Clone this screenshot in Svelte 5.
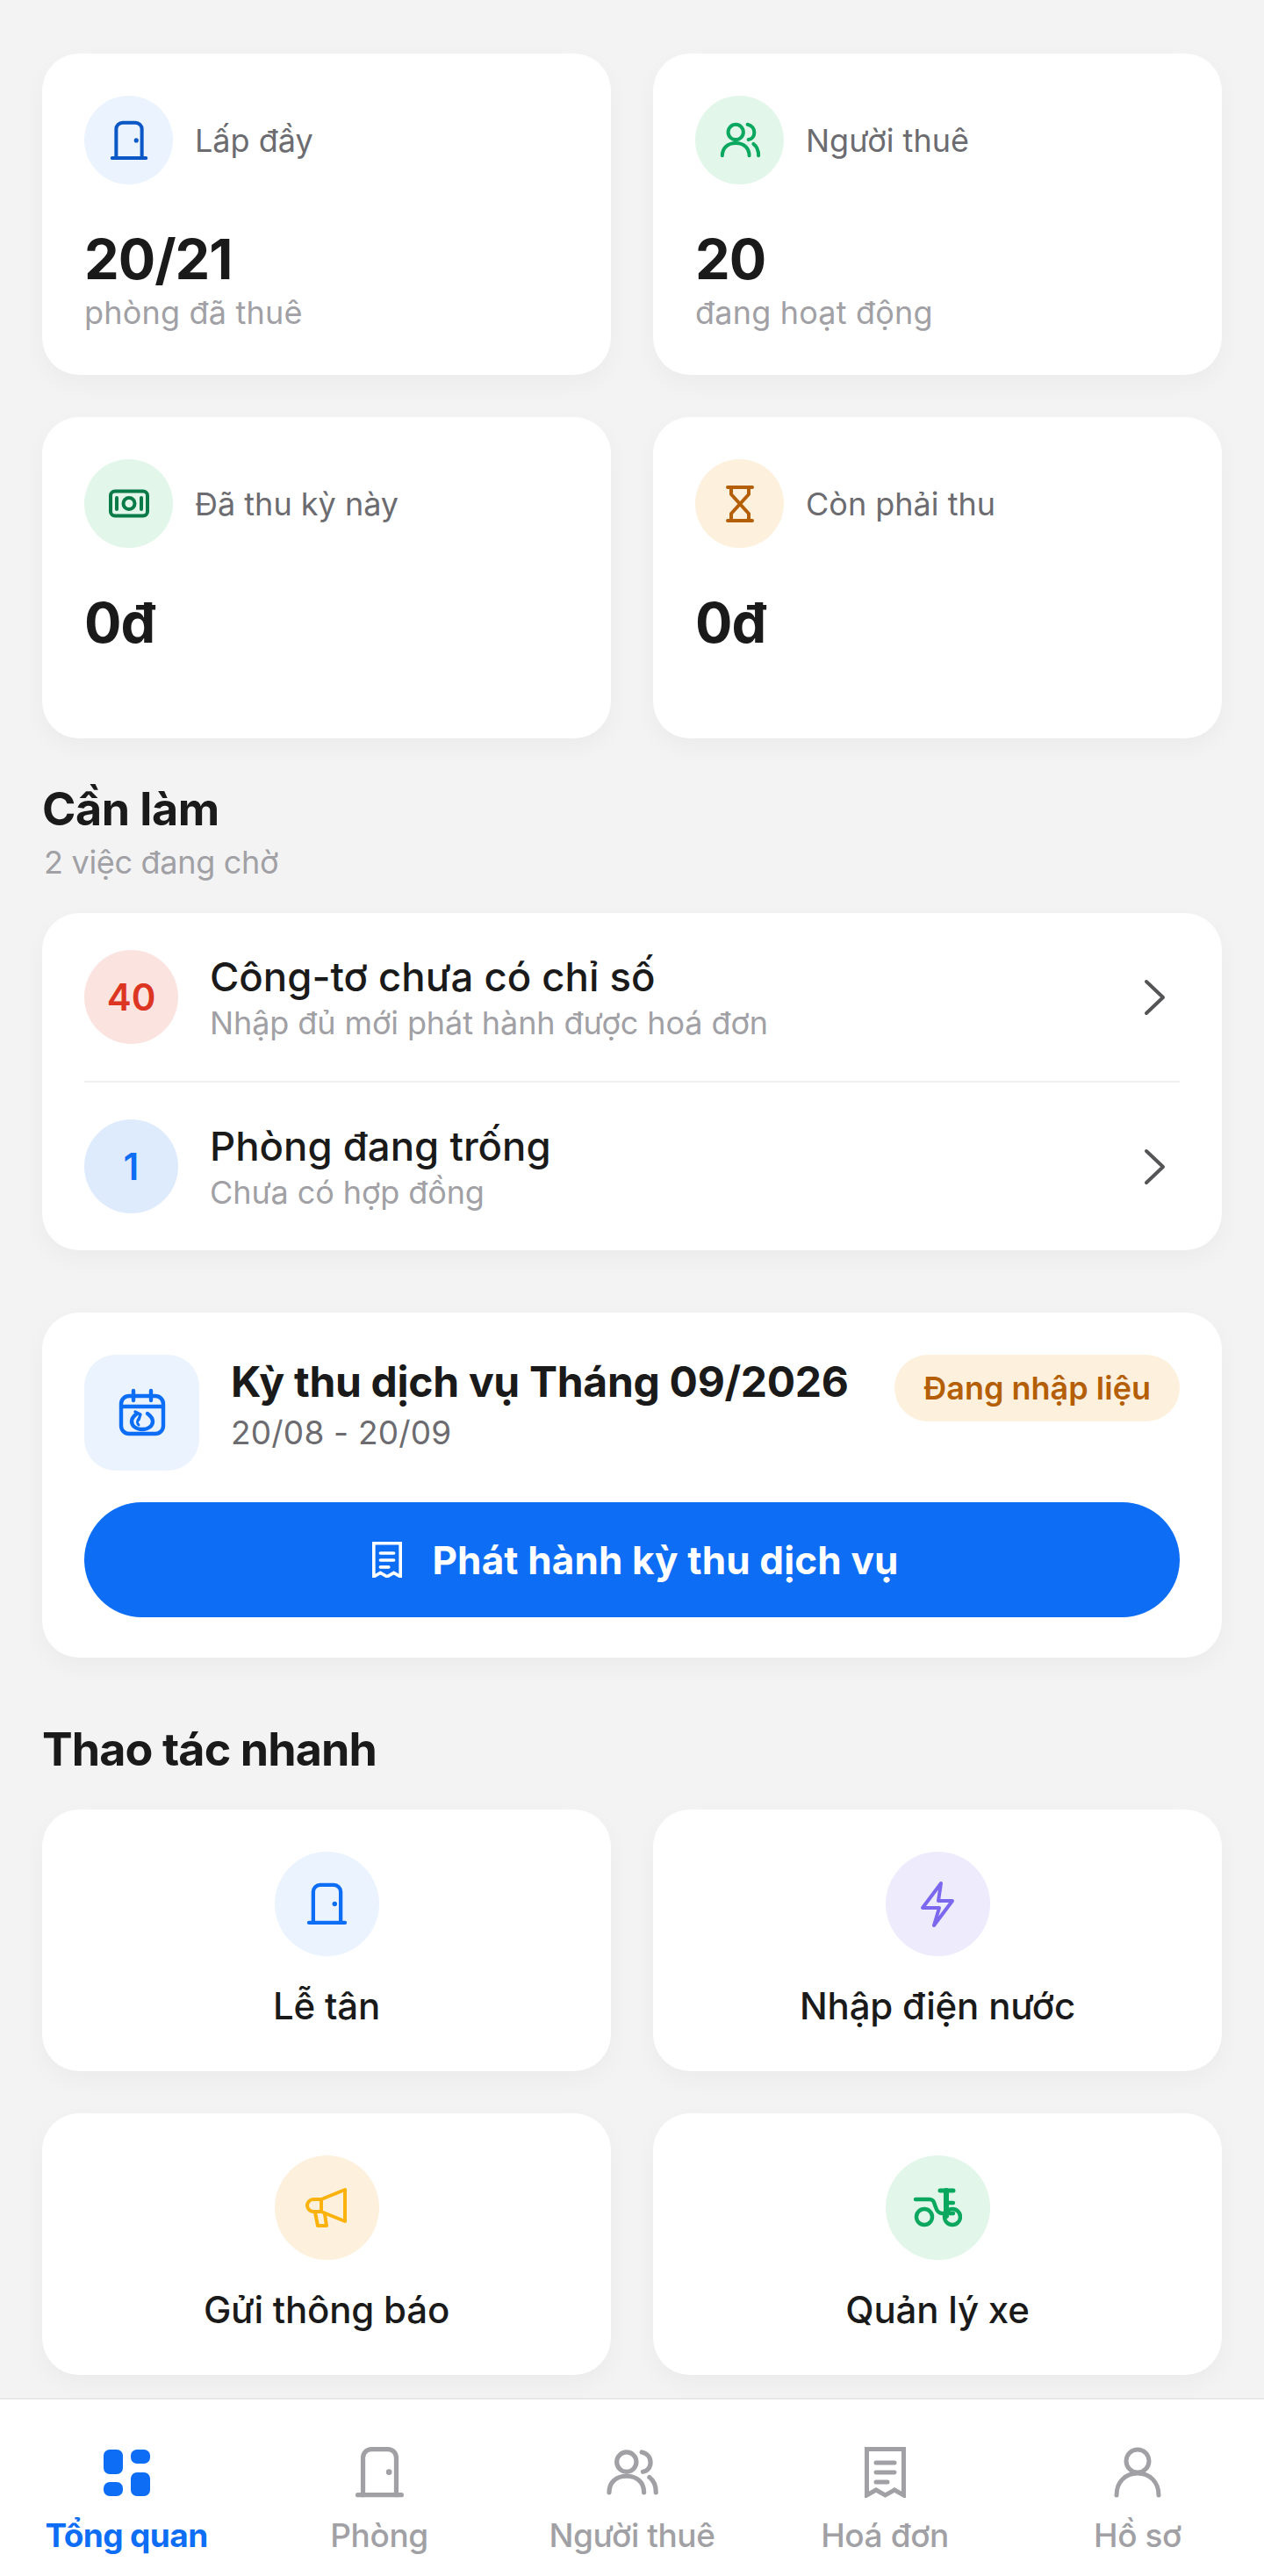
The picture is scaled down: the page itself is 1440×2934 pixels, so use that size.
<script>
  const stats = [
    { icon: "door", tone: "blue", label: "Lấp đầy", value: "20/21", sub: "phòng đã thuê" },
    { icon: "people", tone: "green", label: "Người thuê", value: "20", sub: "đang hoạt động" },
    { icon: "money", tone: "green", label: "Đã thu kỳ này", value: "0đ" },
    { icon: "hourglass", tone: "amber", label: "Còn phải thu", value: "0đ" }
  ];
  const todos = [
    { n: 40, tone: "red", title: "Công-tơ chưa có chỉ số", sub: "Nhập đủ mới phát hành được hoá đơn" },
    { n: 1, tone: "sky", title: "Phòng đang trống", sub: "Chưa có hợp đồng" }
  ];
  const actions = [
    { icon: "door", tone: "blue", label: "Lễ tân" },
    { icon: "bolt", tone: "violet", label: "Nhập điện nước" },
    { icon: "mega", tone: "yellow", label: "Gửi thông báo" },
    { icon: "bike", tone: "green", label: "Quản lý xe" }
  ];
  const tabs = [
    { icon: "grid", label: "Tổng quan", active: true },
    { icon: "door", label: "Phòng" },
    { icon: "people", label: "Người thuê" },
    { icon: "receipt", label: "Hoá đơn" },
    { icon: "person", label: "Hồ sơ" }
  ];
</script>

{#snippet door(w)}
  <svg width={w} height={w * 1.04} viewBox="0 0 48 50" fill="none" stroke="currentColor" stroke-width="4.4" stroke-linecap="round">
    <path d="M3 47H45" />
    <path d="M8 47V11a8 8 0 0 1 8-8h16a8 8 0 0 1 8 8v36" />
    <circle cx="33" cy="25" r="2.8" fill="currentColor" stroke="none" />
  </svg>
{/snippet}

{#snippet people(w)}
  <svg width={w} height={w * 0.89} viewBox="0 0 50 44.5" fill="none" stroke="currentColor" stroke-width="4.2" stroke-linecap="round">
    <circle cx="20" cy="13" r="9" />
    <path d="M4 41c0-9 6-15 16-15s16 6 16 15" />
    <path d="M34 4c5 1 8 5 8 9.500s-3 8-7 8.500" />
    <path d="M41 27c4 3 6 8 6 14" />
  </svg>
{/snippet}

{#snippet money()}
  <svg width="48" height="33" viewBox="0 0 48 33" fill="none" stroke="currentColor" stroke-width="4" stroke-linecap="round">
    <rect x="3" y="2.500" width="42" height="28" rx="5" />
    <circle cx="24" cy="16.500" r="6.500" />
    <path d="M10 10V23M38 10V23" />
  </svg>
{/snippet}

{#snippet hourglass()}
  <svg width="32" height="44" viewBox="0 0 32 44" fill="none" stroke="currentColor" stroke-width="4" stroke-linecap="round" stroke-linejoin="round">
    <path d="M2 3H30M2 41H30" />
    <path d="M6 3V11L26 33V41M26 3V11L6 33V41" />
  </svg>
{/snippet}

{#snippet bolt()}
  <svg width="40" height="54" viewBox="0 0 40 54" fill="none" stroke="currentColor" stroke-width="4" stroke-linejoin="round">
    <path d="M24 3 3 31H22L16 51 37 23H21Z" />
  </svg>
{/snippet}

{#snippet mega()}
  <svg width="48" height="47" viewBox="0 0 48 47" fill="none" stroke="currentColor" stroke-width="4" stroke-linejoin="round" stroke-linecap="round">
    <path d="M18 14 45 3V39L18 28Z" />
    <path d="M18 14H9a7 7 0 0 0 0 14H18Z" />
    <path d="M11 29 14 44H24L22 31" />
  </svg>
{/snippet}

{#snippet bike()}
  <svg width="56" height="46" viewBox="0 0 56 46" fill="none" stroke="currentColor" stroke-width="4.400" stroke-linecap="round" stroke-linejoin="round">
    <path d="M31 3H46" stroke-width="5" />
    <path d="M38 3V32" stroke-width="6" />
    <path d="M3 13H19c5 0 5 4 7 9 1 4 4 7 8 7H46" />
    <circle cx="13" cy="33" r="9" />
    <circle cx="45" cy="33" r="9" />
    <path d="M38 17H46" />
  </svg>
{/snippet}

{#snippet calendar()}
  <svg width="56" height="56" viewBox="0 0 56 56" fill="none" stroke="currentColor" stroke-width="4.400" stroke-linecap="round" stroke-linejoin="round">
    <rect x="4" y="9" width="48" height="43" rx="9" />
    <path d="M4 21H52" />
    <path d="M18 3V14M38 3V14" />
    <path d="M22 29c-4 3-6 6-6 9 0 5 5 9 12 9s12-4 12-9c0-3-2-6-6-9" />
    <path d="M20 27l6 3-2 6" stroke-width="3.400" />
    <path d="M24 42c-2-2-2-5 0-7" stroke-width="3" />
  </svg>
{/snippet}

{#snippet receipt(w)}
  <svg width={w} height={w * 1.234} viewBox="0 0 47 58" fill="none" stroke="currentColor" stroke-width="5" stroke-linecap="round" stroke-linejoin="miter">
    <path d="M2.500 2.500H44.500V55L34 49 23.500 55 13 49 2.500 55Z" />
    <path d="M13 18H34M13 29H34M13 40H26" />
  </svg>
{/snippet}

{#snippet grid()}
  <svg width="53" height="53" viewBox="0 0 53 53" fill="currentColor">
    <rect x="0" y="0" width="22" height="28" rx="7" />
    <rect x="0" y="37" width="22" height="16" rx="7" />
    <rect x="31" y="0" width="22" height="16" rx="7" />
    <rect x="31" y="26" width="22" height="27" rx="7" />
  </svg>
{/snippet}

{#snippet person()}
  <svg width="54" height="58" viewBox="0 0 54 58" fill="none" stroke="currentColor" stroke-width="5" stroke-linecap="round">
    <circle cx="27" cy="16" r="13" />
    <path d="M3 55c0-15 10-25 24-25s24 10 24 25" />
  </svg>
{/snippet}

{#snippet chevron()}
  <svg width="26" height="42" viewBox="0 0 26 42" fill="none" stroke="currentColor" stroke-width="4" stroke-linecap="round" stroke-linejoin="round">
    <path d="M4 3 23 21 4 39" />
  </svg>
{/snippet}

<div class="page">
  <main>
    <section class="grid">
      {#each stats as s}
        <div class="card stat">
          <div class="stat-head">
            <span class="round {s.tone}">
              {#if s.icon === "door"}
                <span class="deep">{@render door(44)}</span>
              {:else if s.icon === "people"}
                {@render people(48)}
              {:else if s.icon === "money"}
                <span class="forest">{@render money()}</span>
              {:else}
                {@render hourglass()}
              {/if}
            </span>
            <span class="stat-label">{s.label}</span>
          </div>
          <div class="stat-value">{s.value}</div>
          {#if s.sub}<div class="stat-sub">{s.sub}</div>{/if}
        </div>
      {/each}
    </section>

    <h2 class="todo-title">Cần làm</h2>
    <p class="todo-count">2 việc đang chờ</p>

    <section class="card todo">
      {#each todos as t, i}
        {#if i > 0}<div class="divider"></div>{/if}
        <div class="todo-row">
          <span class="count {t.tone}">{t.n}</span>
          <div class="todo-text">
            <div class="todo-name">{t.title}</div>
            <div class="todo-sub">{t.sub}</div>
          </div>
          <span class="chev">{@render chevron()}</span>
        </div>
      {/each}
    </section>

    <section class="card period">
      <div class="period-head">
        <span class="period-icon">{@render calendar()}</span>
        <div class="period-text">
          <div class="period-name">Kỳ thu dịch vụ Tháng 09/2026</div>
          <div class="period-date">20/08 - 20/09</div>
        </div>
        <span class="badge">Đang nhập liệu</span>
      </div>
      <button type="button" class="primary">
        {@render receipt(34)}
        <span>Phát hành kỳ thu dịch vụ</span>
      </button>
    </section>

    <h2 class="quick-title">Thao tác nhanh</h2>
    <section class="grid">
      {#each actions as a}
        <div class="card action">
          <span class="round large {a.tone}">
            {#if a.icon === "door"}
              <span class="bright">{@render door(47)}</span>
            {:else if a.icon === "bolt"}
              {@render bolt()}
            {:else if a.icon === "mega"}
              {@render mega()}
            {:else}
              {@render bike()}
            {/if}
          </span>
          <span class="action-label">{a.label}</span>
        </div>
      {/each}
    </section>
  </main>

  <nav>
    {#each tabs as tab}
      <div class="tab" class:active={tab.active}>
        <span class="tab-icon">
          {#if tab.icon === "grid"}
            {@render grid()}
          {:else if tab.icon === "door"}
            {@render door(57)}
          {:else if tab.icon === "people"}
            {@render people(62)}
          {:else if tab.icon === "receipt"}
            {@render receipt(47)}
          {:else}
            {@render person()}
          {/if}
        </span>
        <span class="tab-label">{tab.label}</span>
      </div>
    {/each}
  </nav>
</div>

<style>
  :global(body) {
    margin: 0;
    background: #f3f3f4;
    font-family: Inter, "Noto Sans", sans-serif;
    color: #1a1a1a;
  }

  .page {
    width: 1440px;
    height: 2934px;
    display: flex;
    flex-direction: column;
  }

  main {
    flex: 1;
    padding: 61px 48px 0;
  }

  .grid {
    display: grid;
    grid-template-columns: 1fr 1fr;
    gap: 48px;
  }

  .card {
    background: #fff;
    border-radius: 42px;
    box-shadow: 0 10px 28px rgba(0, 0, 0, 0.035);
  }

  /* stat cards */
  .stat {
    height: 366px;
    box-sizing: border-box;
    padding: 48px;
  }

  .stat-head {
    display: flex;
    align-items: center;
    gap: 25px;
  }

  .round {
    width: 101px;
    height: 101px;
    border-radius: 50%;
    display: flex;
    align-items: center;
    justify-content: center;
    flex: none;
  }

  .round.large {
    width: 119px;
    height: 119px;
  }

  .blue { background: #ebf3fe; color: #0d6ef5; }
  .green { background: #e2f6ea; color: #0aa85f; }
  .amber { background: #fdf1de; color: #b45f06; }
  .violet { background: #eeebfd; color: #7b68ee; }
  .yellow { background: #fdf1de; color: #fbb20c; }
  .red { background: #fbe3e0; color: #dc3522; }
  .sky { background: #deebfd; color: #0d6ef5; }

  .deep { color: #0b57c5; display: flex; }
  .forest { color: #0a7a48; display: flex; }
  .bright { color: #0d6ef5; display: flex; }

  .stat-label {
    font-size: 36px;
    line-height: 48px;
    color: #6b6b70;
  }

  .stat-value {
    margin-top: 53px;
    font-size: 63px;
    line-height: 64px;
    font-weight: 700;
    letter-spacing: -1px;
  }

  .stat-sub {
    margin-top: 5px;
    font-size: 36px;
    line-height: 48px;
    color: #a0a0a5;
    letter-spacing: 0.2px;
  }

  /* todo */
  .todo-title {
    margin: 51px 0 0;
    font-size: 52px;
    line-height: 60px;
    font-weight: 700;
    letter-spacing: -0.5px;
  }

  .todo-count {
    margin: 8px 2px 0;
    font-size: 36px;
    line-height: 44px;
    color: #a0a0a5;
    letter-spacing: -0.3px;
  }

  .todo {
    margin-top: 36px;
    padding: 42px 48px;
  }

  .todo-row {
    display: flex;
    align-items: center;
  }

  .count {
    width: 107px;
    height: 107px;
    border-radius: 50%;
    display: flex;
    align-items: center;
    justify-content: center;
    font-size: 42px;
    font-weight: 600;
    flex: none;
  }

  .todo-text {
    margin-left: 36px;
    padding-top: 2px;
    flex: 1;
  }

  .todo-name {
    font-size: 45.5px;
    line-height: 54px;
    font-weight: 500;
  }

  .todo-sub {
    margin-top: 2px;
    font-size: 36px;
    line-height: 46px;
    color: #a0a0a5;
    letter-spacing: -0.1px;
  }

  .chev {
    display: flex;
    color: #555558;
    margin-right: 16px;
  }

  .divider {
    height: 2px;
    background: #f0f0f2;
    margin: 42px 0;
  }

  /* period */
  .period {
    margin-top: 71px;
    padding: 48px 48px 46px;
  }

  .period-head {
    display: flex;
    align-items: flex-start;
  }

  .period-icon {
    width: 131px;
    height: 132px;
    border-radius: 36px;
    background: #ebf3fe;
    color: #0d6ef5;
    display: flex;
    align-items: center;
    justify-content: center;
    flex: none;
  }

  .period-text {
    margin-left: 36px;
    padding-top: 1px;
    flex: 1;
  }

  .period-name {
    font-size: 48px;
    line-height: 60px;
    font-weight: 700;
    letter-spacing: -0.3px;
    white-space: nowrap;
  }

  .period-date {
    margin-top: 5px;
    font-size: 37px;
    line-height: 46px;
    color: #6b6b70;
    letter-spacing: 0.2px;
  }

  .badge {
    height: 76px;
    padding: 0 33px;
    border-radius: 38px;
    background: #fdf1de;
    color: #b45f06;
    font-size: 36px;
    font-weight: 600;
    line-height: 76px;
    white-space: nowrap;
  }

  .primary {
    width: 100%;
    height: 131px;
    margin-top: 36px;
    padding: 0 0 0 8px;
    border: 0;
    border-radius: 66px;
    background: #0d6ef5;
    color: #fff;
    display: flex;
    align-items: center;
    justify-content: center;
    gap: 34px;
    font-family: inherit;
    font-size: 44px;
    font-weight: 700;
    letter-spacing: 0.15px;
  }

  /* quick actions */
  .quick-title {
    margin: 75px 0 0;
    font-size: 52px;
    line-height: 60px;
    font-weight: 700;
    letter-spacing: -0.9px;
  }

  .quick-title + .grid {
    margin-top: 38px;
  }

  .action {
    height: 298px;
    box-sizing: border-box;
    padding-top: 48px;
    display: flex;
    flex-direction: column;
    align-items: center;
  }

  .action-label {
    margin-top: 30px;
    font-size: 42px;
    line-height: 54px;
    font-weight: 450;
    letter-spacing: -0.2px;
  }

  /* bottom nav */
  nav {
    height: 203px;
    box-sizing: border-box;
    background: #fff;
    border-top: 2px solid #e8e8ea;
    display: grid;
    grid-template-columns: repeat(5, 1fr);
    position: relative;
  }

  .tab {
    display: flex;
    flex-direction: column;
    align-items: center;
    padding-top: 54px;
    color: #a0a0a5;
  }

  .tab.active {
    color: #0d6ef5;
  }

  .tab-icon {
    height: 58px;
    display: flex;
    align-items: center;
  }

  .tab-label {
    margin-top: 20px;
    font-size: 37px;
    line-height: 46px;
    font-weight: 500;
    letter-spacing: -0.4px;
  }

  .tab.active .tab-label {
    font-weight: 700;
    letter-spacing: -0.6px;
  }
</style>
